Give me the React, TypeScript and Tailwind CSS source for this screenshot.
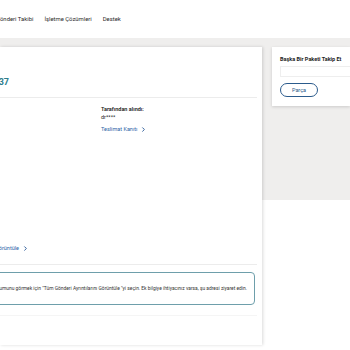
import { ChevronRight } from "lucide-react"

const nav = ["Gönderi Takibi", "İşletme Çözümleri", "Destek"]

export default function App() {
  return (
    <div className="w-[350px] h-[350px] overflow-hidden bg-white font-['Roboto',sans-serif] text-[#1c1c1c]">
      {/* header */}
      <header className="h-[38px] flex items-center bg-white">
        <nav className="flex items-center gap-[11px] -ml-[4px] text-[5.9px] text-[#2a2a2a]">
          {nav.map((item) => (
            <span key={item}>{item}</span>
          ))}
        </nav>
      </header>

      <div className="h-[312px] pt-[9px] flex gap-[10px] bg-[linear-gradient(to_bottom,#efeeed_162px,#ffffff_162px)]">
        {/* main card */}
        <section className="w-[262px] h-[298px] shrink-0 bg-white shadow-[1px_0_3px_rgba(0,0,0,0.15)] flex flex-col">
          <div className="pt-[29px] flex justify-end w-[9px]">
            <span className="whitespace-nowrap text-[9px] font-bold text-[#2e7d8c] leading-[12px]">1Z9V5A476837</span>
          </div>
          <div className="mt-[9px] h-px w-[257px] bg-[#ececec]" />

          <div className="pl-[101px] pt-[7px] text-[5.5px] leading-[8px]">
            <div className="font-semibold">Tarafından alındı:</div>
            <div>dr****</div>
            <a className="mt-[4px] flex items-center gap-[3px] text-[#2c63a6]">
              Teslimat Kanıtı
              <ChevronRight className="w-[7px] h-[7px] text-[#1d4f91]" strokeWidth={3} />
            </a>
          </div>

          <div className="mt-[111px] flex justify-end w-[29px]">
            <a className="whitespace-nowrap flex items-center gap-[3px] text-[5.5px] text-[#2c63a6] leading-[8px]">
              Tüm Gönderi Ayrıntılarını Görüntüle
              <ChevronRight className="w-[7px] h-[7px] text-[#1d4f91]" strokeWidth={3} />
            </a>
          </div>
          <div className="mt-[12px] h-px w-[257px] bg-[#ececec]" />

          <div className="mt-[7px] -ml-[4px] w-[259px] h-[33px] rounded-[4px] border border-[#6e9fab] flex items-center justify-end pr-[7px]">
            <p className="whitespace-nowrap text-[4.9px] text-[#333]">
              Teslimat kanıtının konumunu görmek için "Tüm Gönderi Ayrıntılarını Görüntüle "yi seçin. Ek bilgiye ihtiyacınız varsa, şu adresi ziyaret edin.
            </p>
          </div>
          <div className="mt-[10px] h-px w-[257px] bg-[#f5f5f5]" />
        </section>

        {/* side card */}
        <aside className="flex-1 h-[59px] bg-white shadow-[0_1px_3px_rgba(0,0,0,0.15)] pl-[8px] pt-[9px]">
          <h3 className="text-[5.5px] font-bold leading-[7px] text-[#222]">Başka Bir Paketi Takip Et</h3>
          <div className="mt-[3px] h-[11px] border border-[#eeeeee] border-r-0" />
          <button className="mt-[6px] w-[38px] h-[14px] rounded-full border border-[#2b5b8c] text-[5.5px] text-[#2b5b8c] flex items-center justify-center">
            Parça
          </button>
        </aside>
      </div>
    </div>
  )
}
